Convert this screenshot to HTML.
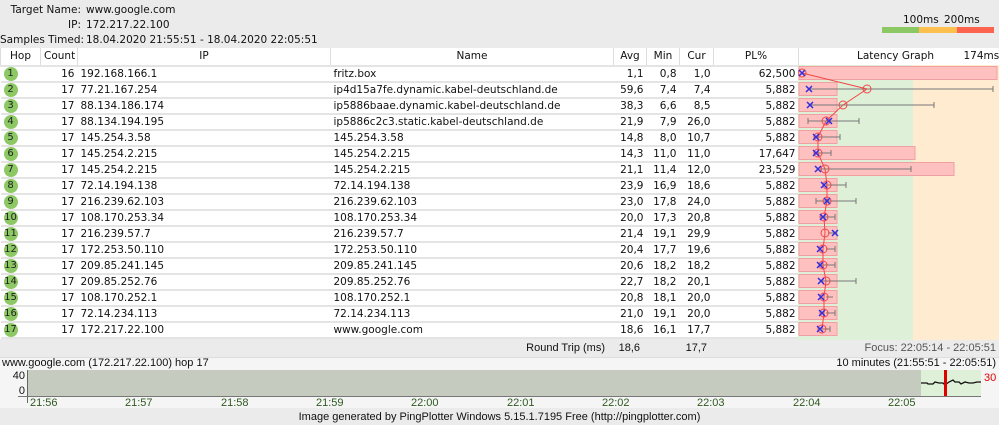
<!DOCTYPE html>
<html><head><meta charset="utf-8"><style>
*{margin:0;padding:0;box-sizing:border-box}
body{width:999px;height:425px;overflow:hidden;background:#ebebeb;font-family:"DejaVu Sans","Liberation Sans",sans-serif;font-size:10.5px;color:#111;position:relative}
.a{position:absolute;white-space:nowrap}
.r{text-align:right}
.c{text-align:center}
.n{font-family:"Liberation Sans",sans-serif;font-size:11px}
table{position:absolute;left:0;top:48px;border-collapse:collapse;width:999px;table-layout:fixed}
td{height:15px;padding:0 3px;border-bottom:2px solid #e4e4e4;background:#fff;white-space:nowrap;overflow:hidden;line-height:13px;vertical-align:middle}
tr.h td{background:#fff;border-left:1px solid #ddd;text-align:center;height:18px}
.hop{display:inline-block;width:14px;height:14px;border-radius:7px;background:#8cc864;text-align:center;font-size:10px;line-height:14px;color:#222;vertical-align:middle}
</style></head><body>
<div class="a r" style="left:0;width:81px;top:4px">Target Name:</div>
<div class="a" style="left:86px;top:4px">www.google.com</div>
<div class="a r" style="left:0;width:81px;top:19px">IP:</div>
<div class="a" style="left:86px;top:19px">172.217.22.100</div>
<div class="a r" style="left:0;width:81px;top:34px">Samples Timed:</div>
<div class="a" style="left:86px;top:34px">18.04.2020 21:55:51 - 18.04.2020 22:05:51</div>
<div class="a" style="left:903px;top:14px">100ms</div>
<div class="a" style="left:944px;top:14px">200ms</div>
<div class="a" style="left:882px;top:27px;width:37px;height:6px;background:#8cc864"></div>
<div class="a" style="left:919px;top:27px;width:38px;height:6px;background:#fdbf4e"></div>
<div class="a" style="left:957px;top:27px;width:37px;height:6px;background:#fc6450"></div>
<div class="a" style="left:0;top:48px;width:999px;height:291px;background:#fff"></div>
<table>
<colgroup><col style="width:40px"><col style="width:37px"><col style="width:253px"><col style="width:283px"><col style="width:33px"><col style="width:33px"><col style="width:34px"><col style="width:85px"><col style="width:201px"></colgroup>
<tr class="h"><td>Hop</td><td>Count</td><td>IP</td><td>Name</td><td>Avg</td><td>Min</td><td>Cur</td><td>PL%</td><td style="text-align:left;padding-left:58px">Latency Graph<span style="position:absolute;left:963px">174ms</span></td></tr>
<tr><td><span class="hop">1</span></td><td class="r">16</td><td>192.168.166.1</td><td>fritz.box</td><td class="r">1,1</td><td class="r">0,8</td><td class="r">1,0</td><td class="r">62,500</td><td></td></tr>
<tr><td><span class="hop">2</span></td><td class="r">17</td><td>77.21.167.254</td><td>ip4d15a7fe.dynamic.kabel-deutschland.de</td><td class="r">59,6</td><td class="r">7,4</td><td class="r">7,4</td><td class="r">5,882</td><td></td></tr>
<tr><td><span class="hop">3</span></td><td class="r">17</td><td>88.134.186.174</td><td>ip5886baae.dynamic.kabel-deutschland.de</td><td class="r">38,3</td><td class="r">6,6</td><td class="r">8,5</td><td class="r">5,882</td><td></td></tr>
<tr><td><span class="hop">4</span></td><td class="r">17</td><td>88.134.194.195</td><td>ip5886c2c3.static.kabel-deutschland.de</td><td class="r">21,9</td><td class="r">7,9</td><td class="r">26,0</td><td class="r">5,882</td><td></td></tr>
<tr><td><span class="hop">5</span></td><td class="r">17</td><td>145.254.3.58</td><td>145.254.3.58</td><td class="r">14,8</td><td class="r">8,0</td><td class="r">10,7</td><td class="r">5,882</td><td></td></tr>
<tr><td><span class="hop">6</span></td><td class="r">17</td><td>145.254.2.215</td><td>145.254.2.215</td><td class="r">14,3</td><td class="r">11,0</td><td class="r">11,0</td><td class="r">17,647</td><td></td></tr>
<tr><td><span class="hop">7</span></td><td class="r">17</td><td>145.254.2.215</td><td>145.254.2.215</td><td class="r">21,1</td><td class="r">11,4</td><td class="r">12,0</td><td class="r">23,529</td><td></td></tr>
<tr><td><span class="hop">8</span></td><td class="r">17</td><td>72.14.194.138</td><td>72.14.194.138</td><td class="r">23,9</td><td class="r">16,9</td><td class="r">18,6</td><td class="r">5,882</td><td></td></tr>
<tr><td><span class="hop">9</span></td><td class="r">17</td><td>216.239.62.103</td><td>216.239.62.103</td><td class="r">23,0</td><td class="r">17,8</td><td class="r">24,0</td><td class="r">5,882</td><td></td></tr>
<tr><td><span class="hop">10</span></td><td class="r">17</td><td>108.170.253.34</td><td>108.170.253.34</td><td class="r">20,0</td><td class="r">17,3</td><td class="r">20,8</td><td class="r">5,882</td><td></td></tr>
<tr><td><span class="hop">11</span></td><td class="r">17</td><td>216.239.57.7</td><td>216.239.57.7</td><td class="r">21,4</td><td class="r">19,1</td><td class="r">29,9</td><td class="r">5,882</td><td></td></tr>
<tr><td><span class="hop">12</span></td><td class="r">17</td><td>172.253.50.110</td><td>172.253.50.110</td><td class="r">20,4</td><td class="r">17,7</td><td class="r">19,6</td><td class="r">5,882</td><td></td></tr>
<tr><td><span class="hop">13</span></td><td class="r">17</td><td>209.85.241.145</td><td>209.85.241.145</td><td class="r">20,6</td><td class="r">18,2</td><td class="r">18,2</td><td class="r">5,882</td><td></td></tr>
<tr><td><span class="hop">14</span></td><td class="r">17</td><td>209.85.252.76</td><td>209.85.252.76</td><td class="r">22,7</td><td class="r">18,2</td><td class="r">20,1</td><td class="r">5,882</td><td></td></tr>
<tr><td><span class="hop">15</span></td><td class="r">17</td><td>108.170.252.1</td><td>108.170.252.1</td><td class="r">20,8</td><td class="r">18,1</td><td class="r">20,0</td><td class="r">5,882</td><td></td></tr>
<tr><td><span class="hop">16</span></td><td class="r">17</td><td>72.14.234.113</td><td>72.14.234.113</td><td class="r">21,0</td><td class="r">19,1</td><td class="r">20,0</td><td class="r">5,882</td><td></td></tr>
<tr><td><span class="hop">17</span></td><td class="r">17</td><td>172.217.22.100</td><td>www.google.com</td><td class="r">18,6</td><td class="r">16,1</td><td class="r">17,7</td><td class="r">5,882</td><td></td></tr>
</table>
<svg class="a" style="left:798px;top:65px" width="201" height="275">
<rect x="0" y="0" width="115" height="275" fill="#dff0d8"/>
<rect x="115" y="0" width="86" height="275" fill="#feebd0"/>
<g fill="#ffc0c0" stroke="#f0a0a0">
<rect x="1" y="1.5" width="198" height="13"/>
<rect x="1" y="17.5" width="38" height="13"/><rect x="1" y="33.5" width="38" height="13"/><rect x="1" y="49.5" width="38" height="13"/><rect x="1" y="65.5" width="38" height="13"/>
<rect x="1" y="81.5" width="116" height="13"/><rect x="1" y="97.5" width="155" height="13"/>
<rect x="1" y="113.5" width="38" height="13"/><rect x="1" y="129.5" width="38" height="13"/><rect x="1" y="145.5" width="38" height="13"/><rect x="1" y="161.5" width="38" height="13"/><rect x="1" y="177.5" width="38" height="13"/><rect x="1" y="193.5" width="38" height="13"/><rect x="1" y="209.5" width="38" height="13"/><rect x="1" y="225.5" width="38" height="13"/><rect x="1" y="241.5" width="38" height="13"/><rect x="1" y="257.5" width="38" height="13"/>
</g>
<g stroke="#777" fill="none">
<path d="M11 24H195M195 21v6M11 40H136M136 37v6M10 56H61M10 53v6M61 53v6M16 72H42M42 69v6M16 88H33M33 85v6M22 104H113M113 101v6M28 120H48M48 117v6M18 136H58M18 133v6M58 133v6M22 152H37M37 149v6M30 168H39M28 184H37M37 181v6M22 200H37M37 197v6M24 216H58M58 213v6M28 232H35M28 248H37M37 245v6M24 264H32M32 261v6"/>
</g>
<polyline fill="none" stroke="#f04848" points="4,8 69,24 45,40 28,56 20,72 20,88 27,104 29,120 29,136 26,152 27,168 25,184 25,200 28,216 26,232 26,248 24,264"/>
<g fill="none" stroke="#f04848"><circle cx="4" cy="8" r="4"/><circle cx="69" cy="24" r="4"/><circle cx="45" cy="40" r="4"/><circle cx="28" cy="56" r="4"/><circle cx="20" cy="72" r="4"/><circle cx="20" cy="88" r="4"/><circle cx="27" cy="104" r="4"/><circle cx="29" cy="120" r="4"/><circle cx="29" cy="136" r="4"/><circle cx="26" cy="152" r="4"/><circle cx="27" cy="168" r="4"/><circle cx="25" cy="184" r="4"/><circle cx="25" cy="200" r="4"/><circle cx="28" cy="216" r="4"/><circle cx="26" cy="232" r="4"/><circle cx="26" cy="248" r="4"/><circle cx="24" cy="264" r="4"/></g>
<g stroke="#3030e0" stroke-width="1.5">
<path d="M1 5l6 6M7 5l-6 6M8 21l6 6M14 21l-6 6M9 37l6 6M15 37l-6 6M28 53l6 6M34 53l-6 6M15 69l6 6M21 69l-6 6M15 85l6 6M21 85l-6 6M17 101l6 6M23 101l-6 6M23 117l6 6M29 117l-6 6M26 133l6 6M32 133l-6 6M22 149l6 6M28 149l-6 6M34 165l6 6M40 165l-6 6M19 181l6 6M25 181l-6 6M19 197l6 6M25 197l-6 6M20 213l6 6M26 213l-6 6M20 229l6 6M26 229l-6 6M21 245l6 6M27 245l-6 6M19 261l6 6M25 261l-6 6"/>
</g>
</svg>
<div class="a" style="left:0;top:340px;width:999px;height:17px;background:#ebebeb"></div>
<div class="a n r" style="left:500px;width:105px;top:342px">Round Trip (ms)</div>
<div class="a n r" style="left:613px;width:27px;top:342px">18,6</div>
<div class="a n r" style="left:679px;width:28px;top:342px">17,7</div>
<div class="a n r" style="right:3px;top:342px;color:#555">Focus: 22:05:14 - 22:05:51</div>
<div class="a" style="left:0;top:357px;width:999px;height:51px;background:#f5f5f5;border-top:1px solid #ddd"></div>
<div class="a n" style="left:2px;top:357px">www.google.com (172.217.22.100) hop 17</div>
<div class="a n r" style="right:3px;top:357px">10 minutes (21:55:51 - 22:05:51)</div>
<div class="a" style="left:28px;top:370px;width:893px;height:26px;background:#c5cbbf"></div>
<div class="a" style="left:921px;top:370px;width:60px;height:26px;background:#dff0d8"></div>
<svg class="a" style="left:921px;top:370px" width="60" height="26"><polyline fill="none" stroke="#111" stroke-width="1.3" points="0,13 6,13 7,14 12,14 14,12 18,13 22,13 24,15 28,12 32,10 34,12 38,12 40,14 44,12 48,13 52,13 56,12 60,12"/></svg>
<div class="a" style="left:944px;top:370px;width:3px;height:26px;background:#e00000"></div>
<div class="a" style="left:27px;top:370px;width:1px;height:33px;background:#666"></div>
<div class="a" style="left:18px;top:396px;width:963px;height:1px;background:#777"></div>
<div class="a n" style="left:984px;top:372px;color:#e00000">30</div>
<div class="a n r" style="left:0;width:25px;top:370px">40</div>
<div class="a n r" style="left:0;width:25px;top:385px">0</div>
<div class="a n" style="left:30px;top:397px;color:#2d5a1e">21:56</div>
<div class="a n" style="left:125px;top:397px;color:#2d5a1e">21:57</div>
<div class="a n" style="left:221px;top:397px;color:#2d5a1e">21:58</div>
<div class="a n" style="left:316px;top:397px;color:#2d5a1e">21:59</div>
<div class="a n" style="left:411px;top:397px;color:#2d5a1e">22:00</div>
<div class="a n" style="left:507px;top:397px;color:#2d5a1e">22:01</div>
<div class="a n" style="left:602px;top:397px;color:#2d5a1e">22:02</div>
<div class="a n" style="left:697px;top:397px;color:#2d5a1e">22:03</div>
<div class="a n" style="left:793px;top:397px;color:#2d5a1e">22:04</div>
<div class="a n" style="left:888px;top:397px;color:#2d5a1e">22:05</div>
<div class="a n c" style="left:0;width:999px;top:411px">Image generated by PingPlotter Windows 5.15.1.7195 Free (http://pingplotter.com)</div>
</body></html>
